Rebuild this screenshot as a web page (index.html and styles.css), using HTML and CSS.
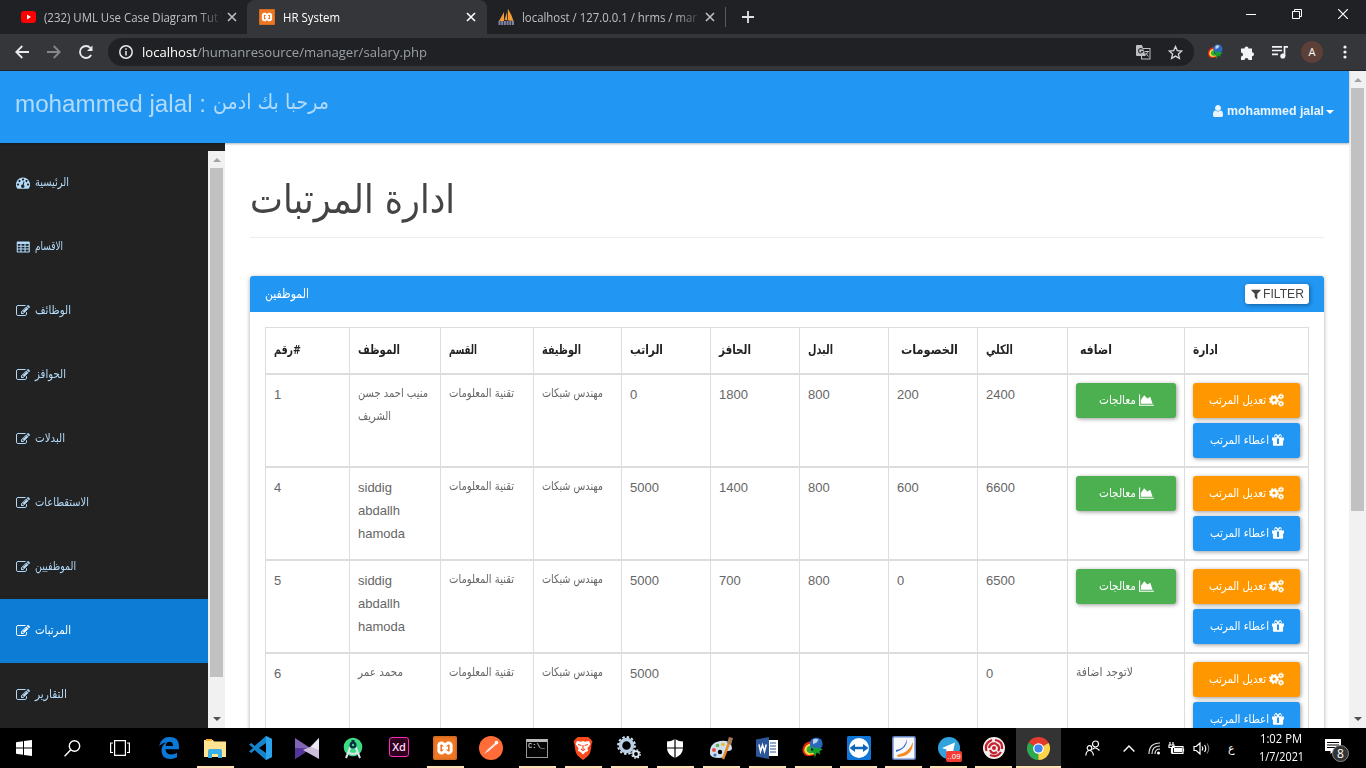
FILE: index.html
```html
<!DOCTYPE html>
<html lang="ar">
<head>
<meta charset="utf-8">
<title>HR System</title>
<link rel="stylesheet" href="styles.css">
</head>
<body>
<svg class="defs" aria-hidden="true">
  <symbol id="edit" viewBox="0 0 1792 1792"><path d="M888 1184l116-116-152-152-116 116v56h96v96h56zm440-720q-16-16-33 1l-350 350q-17 17-1 33t33-1l350-350q17-17 1-33zm80 594v190q0 119-84.500 203.500t-203.500 84.500h-832q-119 0-203.500-84.500t-84.500-203.500v-832q0-119 84.500-203.500t203.500-84.500h832q63 0 117 25 15 7 18 23 3 17-9 29l-49 49q-14 14-32 8-23-6-45-6h-832q-66 0-113 47t-47 113v832q0 66 47 113t113 47h832q66 0 113-47t47-113v-126q0-13 9-22l64-64q15-15 35-7t20 29zm-96-738l288 288-672 672h-288v-288zm444 132l-92 92-288-288 92-92q28-28 68-28t68 28l152 152q28 28 28 68t-28 68z"/></symbol>
  <symbol id="grid" viewBox="0 0 14 14"><path fill-rule="evenodd" d="M1.500 1.500h11.500q.8 0 .8.800v9.400q0 .8-.8.800H1.500q-.8 0-.8-.8V2.300q0-.8.8-.8zM1.800 4v1.800h2.600V4zm3.700 0v1.800h3V4zm4.100 0v1.800h3V4zM1.800 6.800v1.800h2.600V6.800zm3.700 0v1.800h3V6.800zm4.100 0v1.800h3V6.800zM1.800 9.600v1.800h2.600V9.600zm3.700 0v1.800h3V9.600zm4.100 0v1.800h3V9.600z"/></symbol>
  <symbol id="dash" viewBox="0 0 14 14"><path fill-rule="evenodd" d="M7 1.500a7 7 0 0 1 5.900 10.800q-.2.400-.6.400H1.700q-.4 0-.6-.4A7 7 0 0 1 7 1.500zM7 2.500a1 1 0 1 0 .01 0zM3.500 4a1 1 0 1 0 .01 0zM10.500 4a1 1 0 1 0 .01 0zM2 7.500a1 1 0 1 0 .01 0zM12 7.500a1 1 0 1 0 .01 0zM7.500 5.500L6.700 8.600a1.600 1.600 0 1 0 1 .3L8.400 5.700z"/></symbol>
  <symbol id="user" viewBox="0 0 1792 1792"><path d="M1536 1399q0 109-62.500 187t-150.500 78h-854q-88 0-150.500-78t-62.500-187q0-85 8.500-160.500t31.500-152 58.500-131 94-89 134.500-34.500q131 128 313 128t313-128q76 0 134.500 34.500t94 89 58.500 131 31.500 152 8.500 160.500zm-256-887q0 159-112.500 271.500t-271.500 112.500-271.500-112.500-112.500-271.500 112.500-271.500 271.500-112.500 271.500 112.500 112.500 271.500z"/></symbol>
  <symbol id="funnel" viewBox="0 0 1792 1792"><path d="M1595 295q17 41-14 70l-493 493v742q0 42-39 59-13 5-25 5-27 0-45-19l-256-256q-19-19-19-45v-486l-493-493q-31-29-14-70 17-39 59-39h1280q42 0 59 39z"/></symbol>
  <symbol id="area" viewBox="0 0 16 14"><path d="M0 1h1.200v11H16v1.100H0zM2 11V7l3.500-5 3.500 3.500 3-2L14.500 11z"/></symbol>
  <symbol id="cogs" viewBox="0 0 15 14"><g fill="none" stroke="currentColor"><circle cx="5" cy="7" r="2.800" stroke-width="2.500"/><circle cx="5" cy="7" r="4.400" stroke-width="1.400" stroke-dasharray="1.900 1.560"/><circle cx="12" cy="3.500" r="1.600" stroke-width="1.500"/><circle cx="12" cy="3.500" r="2.500" stroke-width=".9" stroke-dasharray="1.200 .76"/><circle cx="12" cy="10.700" r="1.600" stroke-width="1.500"/><circle cx="12" cy="10.700" r="2.500" stroke-width=".9" stroke-dasharray="1.200 .76"/></g></symbol>
  <symbol id="gift" viewBox="0 0 12 14"><path fill-rule="evenodd" d="M0 4.500h3a2 2 0 0 1 1-3.500Q5 1 6 2.800 7 1 8 1a2 2 0 0 1 1 3.500h3v3h-.9v4.300q0 .9-.9.900H1.800q-.9 0-.9-.9V7.500H0zM4 2.200a1 1 0 0 0 0 2h1.300zM8 2.200L6.700 4.200H8a1 1 0 0 0 0-2zM5 5.500V11h2V5.500z"/></symbol>
  <symbol id="x" viewBox="0 0 10 10"><path d="M1 1l8 8M9 1L1 9" stroke="currentColor" stroke-width="1.600" fill="none"/></symbol>
  <symbol id="xampp" viewBox="0 0 24 24"><rect width="24" height="24" rx="2" fill="#ee7724"/><rect x=".8" y=".8" width="22.400" height="22.400" rx="2" fill="none" stroke="#c9661f"/><path d="M8 7h1.500L12 9.500 14.500 7H16q3 .5 2 5 1 4.500-2 5h-1.500L12 14.500 9.500 17H8q-3-.5-2-5-1-4.500 2-5zM9 12h6" fill="none" stroke="#fff" stroke-width="3" stroke-linejoin="round"/></symbol>
  <symbol id="idm" viewBox="0 0 24 24"><path d="M11 4Q1 5 .5 14q0 6 6 7l8-1-3-4-5-2q0-4 6-5z" fill="#e32418"/><path d="M11 6.500Q3 8 2.500 14q0 4.500 5 5.500l6-1-3-3-3-1.500q0-3 4-4z" fill="#ffe034"/><path d="M10 9q-5 1-5 5 0 3 4 4l5-1-4-2z" fill="#30b13c"/><circle cx="15.500" cy="7.500" r="7" fill="#2c68bb"/><path d="M12 3q3-2 6 0l-2 3-4 2z" fill="#bcd3ea"/><path d="M10 11l13 2-3 2-1 1 1 3-4-2-2 6-1-6-3-2 3-1z" fill="#15a32c"/></symbol>
</svg>

<div class="browser">
  <div class="tabs">
    <div class="tab first"><svg width="15" height="12" viewBox="0 0 15 12"><rect width="15" height="12" rx="3" fill="#f00"/><path d="M6 3.500v5l4-2.500z" fill="#fff"/></svg><span class="ttl fade" data-w="174"><i>(232) UML Use Case Diagram Tut</i></span><svg class="close"><use href="#x"/></svg></div>
    <div class="tab active"><svg width="16" height="16"><use href="#xampp"/></svg><span class="ttl" data-w="57"><i>HR System</i></span><svg class="close"><use href="#x"/></svg></div>
    <div class="tab third"><svg width="17" height="17" viewBox="0 0 17 17"><path d="M1 12l5-9v9zM6.500 11L10 0q4 6 5.500 12z" fill="#f39a35"/><path d="M9.500 1v10" stroke="#4d3a20"/><path d="M.5 14h16" stroke="#8083a8" stroke-width="4" stroke-dasharray="2 .7"/></svg><span class="ttl fade" data-w="175"><i>localhost / 127.0.0.1 / hrms / mar</i></span><svg class="close"><use href="#x"/></svg></div>
    <span class="divider"></span>
    <svg class="plus" viewBox="0 0 12 12"><path d="M6 0v12M0 6h12" stroke="#dfe1e5" stroke-width="1.800"/></svg>
    <div class="winctl">
      <svg width="10" height="10"><path d="M0 5.500h10" stroke="#fff"/></svg>
      <svg width="10" height="10" fill="none" stroke="#fff"><path d="M.5 2.500h7v7h-7zM2.500 2.500v-2h7v7h-2"/></svg>
      <svg width="10" height="10"><path d="M0 0l10 10M10 0L0 10" stroke="#fff" stroke-width="1.200"/></svg>
    </div>
  </div>
  <div class="toolbar">
    <svg class="nav" viewBox="0 0 14 14"><path d="M14 7H1.500M7.300 1L1.300 7l6 6"/></svg>
    <svg class="nav dim" viewBox="0 0 14 14"><path d="M0 7h12.500M6.700 1l6 6-6 6"/></svg>
    <svg class="nav" viewBox="0 0 14 14"><path d="M12.200 10A6 6 0 1 1 11.500 3"/><path d="M13.500.5v5.500H8z" fill="#e8eaed" stroke="none"/></svg>
    <div class="omni">
      <svg width="14" height="14" viewBox="0 0 14 14" fill="none" stroke="#e8eaed" stroke-width="1.500"><circle cx="7" cy="7" r="6.200"/><path d="M7 6v4.500M7 3.300v1.500"/></svg>
      <span class="url" data-w="285"><i><b>localhost</b>/humanresource/manager/salary.php</i></span>
      <span class="grow"></span>
      <svg class="translate" width="15" height="15" viewBox="0 0 15 15"><rect x="5.500" y="3.500" width="8.500" height="10.500" fill="none" stroke="#bdc1c6"/><path d="M0 1q0-1 1-1h5l3.500 11H1q-1 0-1-1z" fill="#bdc1c6"/><path d="M6.500 4.500a2.200 2.200 0 1 0 .3 2H5" fill="none" stroke="#333" stroke-width="1.100"/><path d="M8.500 6.500h4.500M11.800 6.500q-.8 3-3 4M9.500 8l3 3.500" fill="none" stroke="#bdc1c6"/></svg>
      <svg width="15" height="15" viewBox="0 0 15 15"><path d="M7.500 1.500l1.800 4.100 4.500.4-3.400 3 1 4.400-3.900-2.300-3.900 2.300 1-4.400-3.400-3 4.500-.4z" fill="none" stroke="#d5d8dc" stroke-width="1.300"/></svg>
    </div>
    <div class="ext">
      <svg width="17" height="16"><use href="#idm"/></svg>
      <svg width="15" height="15" viewBox="0 0 15 15"><path d="M1 3.500h3.500a2 2 0 1 1 4 0H12v3.800a2 2 0 1 1 0 4V15H8.500a2 2 0 1 0-4 0H1v-3.500a2 2 0 1 0 0-4z" fill="#f1f3f4"/></svg>
      <svg width="16" height="14" viewBox="0 0 16 14" stroke="#f1f3f4" stroke-width="1.700" fill="none"><path d="M0 1.800h10M0 5.500h10M0 9.300h6M12.500 11V1.800H16"/><circle cx="10.800" cy="11" r="1.700" fill="#f1f3f4"/></svg>
      <span class="avatar">A</span>
      <svg width="4" height="14" fill="#f1f3f4"><circle cx="2" cy="2" r="1.600"/><circle cx="2" cy="7" r="1.600"/><circle cx="2" cy="12" r="1.600"/></svg>
    </div>
  </div>
</div>

<div class="page">
  <div class="app">
    <header class="topbar">
      <div class="welcome"><span data-w="191"><i>mohammed jalal :</i></span><span class="ar" data-w="116"><i>مرحبا بك ادمن</i></span></div>
      <div class="account"><svg width="14" height="14"><use href="#user"/></svg><span data-w="97"><i>mohammed jalal</i></span><em class="caret"></em></div>
    </header>
    <div class="body">
      <aside class="side">
        <nav class="menu ar">
          <a><svg><use href="#dash"/></svg><span data-w="34"><i>الرئيسية</i></span></a>
          <a><svg><use href="#grid"/></svg><span data-w="28"><i>الاقسام</i></span></a>
          <a><svg><use href="#edit"/></svg><span data-w="36"><i>الوظائف</i></span></a>
          <a><svg><use href="#edit"/></svg><span data-w="31"><i>الحوافز</i></span></a>
          <a><svg><use href="#edit"/></svg><span data-w="30"><i>البدلات</i></span></a>
          <a><svg><use href="#edit"/></svg><span data-w="54"><i>الاستقطاعات</i></span></a>
          <a><svg><use href="#edit"/></svg><span data-w="41"><i>الموظفيين</i></span></a>
          <a class="on"><svg><use href="#edit"/></svg><span data-w="36"><i>المرتبات</i></span></a>
          <a><svg><use href="#edit"/></svg><span data-w="32"><i>التقارير</i></span></a>
        </nav>
        <div class="bar"><em class="up"></em><b class="thumb side-thumb"></b><em class="down"></em></div>
      </aside>
      <main>
        <h1 class="ar"><span data-w="205"><i>ادارة المرتبات</i></span></h1>
        <section class="panel">
          <div class="phead"><span class="ar" data-w="44"><i>الموظفين</i></span><button class="filter"><svg width="12" height="12"><use href="#funnel"/></svg><span data-w="41"><i>FILTER</i></span></button></div>
          <table>
            <colgroup><col style="width:84px"><col style="width:91px"><col style="width:93px"><col style="width:88px"><col style="width:89px"><col style="width:89px"><col style="width:89px"><col style="width:89px"><col style="width:90px"><col style="width:117px"><col style="width:124px"></colgroup>
            <tr class="ar"><th><span data-w="27"><i>رقم#</i></span></th><th><span data-w="42"><i>الموظف</i></span></th><th><span data-w="28"><i>القسم</i></span></th><th><span data-w="39"><i>الوظيفة</i></span></th><th><span data-w="33"><i>الراتب</i></span></th><th><span data-w="32"><i>الحافز</i></span></th><th><span data-w="25"><i>البدل</i></span></th><th class="shift"><span data-w="57"><i>الخصومات</i></span></th><th><span data-w="27"><i>الكلي</i></span></th><th class="shift"><span data-w="32"><i>اضافه</i></span></th><th><span data-w="25"><i>ادارة</i></span></th></tr>
            <tr><td>1</td><td class="ar"><span data-w="70"><i>منيب احمد جسن</i></span><br><span data-w="33"><i>الشريف</i></span></td><td class="ar"><span data-w="65"><i>تقنية المعلومات</i></span></td><td class="ar"><span data-w="61"><i>مهندس شبكات</i></span></td><td>0</td><td>1800</td><td>800</td><td>200</td><td>2400</td><td><button class="btn green ar"><span data-w="37"><i>معالجات</i></span><svg class="wide"><use href="#area"/></svg></button></td><td><button class="btn orange ar"><span data-w="57"><i>تعديل المرتب</i></span><svg class="wide"><use href="#cogs"/></svg></button><button class="btn blue ar"><span data-w="59"><i>اعطاء المرتب</i></span><svg><use href="#gift"/></svg></button></td></tr>
            <tr><td>4</td><td>siddig<br>abdallh<br>hamoda</td><td class="ar"><span data-w="65"><i>تقنية المعلومات</i></span></td><td class="ar"><span data-w="61"><i>مهندس شبكات</i></span></td><td>5000</td><td>1400</td><td>800</td><td>600</td><td>6600</td><td><button class="btn green ar"><span data-w="37"><i>معالجات</i></span><svg class="wide"><use href="#area"/></svg></button></td><td><button class="btn orange ar"><span data-w="57"><i>تعديل المرتب</i></span><svg class="wide"><use href="#cogs"/></svg></button><button class="btn blue ar"><span data-w="59"><i>اعطاء المرتب</i></span><svg><use href="#gift"/></svg></button></td></tr>
            <tr><td>5</td><td>siddig<br>abdallh<br>hamoda</td><td class="ar"><span data-w="65"><i>تقنية المعلومات</i></span></td><td class="ar"><span data-w="61"><i>مهندس شبكات</i></span></td><td>5000</td><td>700</td><td>800</td><td>0</td><td>6500</td><td><button class="btn green ar"><span data-w="37"><i>معالجات</i></span><svg class="wide"><use href="#area"/></svg></button></td><td><button class="btn orange ar"><span data-w="57"><i>تعديل المرتب</i></span><svg class="wide"><use href="#cogs"/></svg></button><button class="btn blue ar"><span data-w="59"><i>اعطاء المرتب</i></span><svg><use href="#gift"/></svg></button></td></tr>
            <tr><td>6</td><td class="ar"><span data-w="45"><i>محمد عمر</i></span></td><td class="ar"><span data-w="65"><i>تقنية المعلومات</i></span></td><td class="ar"><span data-w="61"><i>مهندس شبكات</i></span></td><td>5000</td><td></td><td></td><td></td><td>0</td><td class="ar"><span data-w="57"><i>لاتوجد اضافة</i></span></td><td><button class="btn orange ar"><span data-w="57"><i>تعديل المرتب</i></span><svg class="wide"><use href="#cogs"/></svg></button><button class="btn blue ar"><span data-w="59"><i>اعطاء المرتب</i></span><svg><use href="#gift"/></svg></button></td></tr>
          </table>
        </section>
      </main>
    </div>
  </div>
  <div class="bar"><em class="up"></em><b class="thumb page-thumb"></b><em class="down"></em></div>
</div>

<footer class="taskbar">
  <div class="slot s48"><svg width="16" height="16" fill="#fff"><path d="M0 2.200L7 1.200v6.300H0zM8 1l8-1v7.500H8zM0 8.500h7v6.300L0 13.800zM8 8.500h8V16l-8-1.100z"/></svg></div>
  <div class="slot s48"><svg width="17" height="17" fill="none" stroke="#fff" stroke-width="1.400"><circle cx="10.500" cy="6" r="5.200"/><path d="M6.800 9.800L.6 16.200"/></svg></div>
  <div class="slot s48"><svg width="20" height="16" fill="none" stroke="#fff" stroke-width="1.200"><path d="M4.600.6h10.800v14.800H4.600zM3 3H.6v9.500H3M17 3h2.400v9.500H17"/></svg></div>
  <div class="slot s48 edge"><svg width="20" height="22" viewBox="0 0 20 22"><path d="M0 9.500Q2 0 10.500 0 20 0 20 9v3.300H6.500Q7 17.500 12.500 17.500q3 0 5.500-1.700v4.400Q15 22 11.500 22 2.500 22 2.500 13.500q0-5 4.500-8Q2.500 6 0 9.500zM6.700 9H14q0-4.300-3.500-4.300T6.700 9z" fill="#0b78d7"/></svg></div>
  <div class="slot run"><svg width="22" height="19" viewBox="0 0 22 19"><path d="M0 1h9l1 1.500h12V18H0z" fill="#ffe393"/><path d="M2 1h6" stroke="#f5ae22" stroke-width="2"/><path d="M4 19v-7q0-2 2-2h10q2 0 2 2v7h-4v-4H8v4z" fill="#39afe5"/></svg></div>
  <div class="slot"><svg width="24" height="24" viewBox="0 0 24 24"><path d="M17 0l6 3v18l-6 3L5.500 14 2.500 17 0 15.500 4 12 0 8.500 2.500 7 5.500 10zM17 7l-7 5 7 5z" fill="#1684cc"/><path d="M17 0l6 3v18l-6 3z" fill="#2aa5ed"/></svg></div>
  <div class="slot"><svg width="24" height="21" viewBox="0 0 24 21"><path d="M0 0l16 10.500L0 21z" fill="#8065b5"/><path d="M0 10L16 10.500 0 21z" fill="#54339a"/><path d="M24 0v21L8 12l7-3z" fill="#cdbfdc"/><path d="M24 0v12l-8-3z" fill="#eee8f2"/></svg></div>
  <div class="slot"><svg width="20" height="22" viewBox="0 0 20 22"><circle cx="10" cy="10" r="9.300" fill="#3ddc84"/><path d="M7.500 10L3 21M12.500 10L17 21M5 15q5 4 10 0" stroke="#dce5ea" stroke-width="2" fill="none"/><circle cx="10" cy="8" r="3.500" fill="#073042"/><circle cx="10" cy="8" r="1.200" fill="#3ddc84"/><path d="M10 3V5" stroke="#073042" stroke-width="3"/></svg></div>
  <div class="slot"><span class="xd">Xd</span></div>
  <div class="slot run"><svg width="24" height="24"><use href="#xampp"/></svg></div>
  <div class="slot"><svg width="24" height="24" viewBox="0 0 24 24"><circle cx="12" cy="12" r="12" fill="#ff6c37"/><path d="M5 18l4-5 7-6 2 1-8 7z" fill="#ffe2d8"/><circle cx="17.500" cy="6.500" r="1.800" fill="#fff"/></svg></div>
  <div class="slot run"><span class="cmd">C:\_</span></div>
  <div class="slot run"><svg width="20" height="24" viewBox="0 0 20 24"><path d="M5 1h10l2.500 2 2 2.500-1 2.500q-.5 9-3.500 12l-5 4-5-4Q2 17 1.500 8l-1-2.500 2-2.500z" fill="#fb4a1d"/><path d="M4 5l4 .7L10 5l2 .7L16 5l1.500 3-3 4 .5 3-2.500 1L10 18.500 7.500 16 5 15l.5-3-3-4z" fill="#fff"/><path d="M5 8.500l3.500 1M15 8.500l-3.500 1M10 9v4M8 13l2 1.500 2-1.500" stroke="#fb4a1d" stroke-width="1.200" fill="none"/></svg></div>
  <div class="slot run"><svg width="24" height="24" viewBox="0 0 24 24" fill="none"><circle cx="9.500" cy="9.500" r="6" stroke="#b7cfe6" stroke-width="3.500"/><circle cx="9.500" cy="9.500" r="8.500" stroke="#d7e6f3" stroke-width="1.800" stroke-dasharray="2.400 2.050"/><circle cx="19" cy="18" r="2.800" stroke="#dceaf5" stroke-width="1.800"/><circle cx="19" cy="18" r="4.200" stroke="#dceaf5" stroke-width="1.300" stroke-dasharray="1.700 1.600"/></svg></div>
  <div class="slot run"><svg width="16" height="19" viewBox="0 0 16 19"><path d="M8 0q4 2.500 8 2.500V9q0 6.500-8 10Q0 15.500 0 9V2.500Q4 2.500 8 0z" fill="#fff"/><path d="M8 0v19M0 9h16" stroke="#000" stroke-width="1.200"/></svg></div>
  <div class="slot run"><svg width="25" height="24" viewBox="0 0 25 24"><path d="M1 18Q0 7 11 5t12 7q0 3-4 3-3 0-3 3 0 4-6 4-8 0-9-4z" fill="#cfe0ee"/><circle cx="5" cy="14" r="2" fill="#e4513b"/><circle cx="8.500" cy="9.500" r="1.800" fill="#62b24f"/><circle cx="14" cy="8.500" r="1.800" fill="#e9bb2e"/><circle cx="11" cy="16" r="2.200" fill="#000"/><circle cx="6" cy="19" r="1.600" fill="#3b74c8"/><path d="M14 23l6-16" stroke="#e98b2b" stroke-width="2.500"/><path d="M18 7l2-6 4 1-2 7z" fill="#a47b55"/></svg></div>
  <div class="slot run"><svg width="22" height="22" viewBox="0 0 22 22"><path d="M12 3h10v16H12z" fill="#fff"/><path d="M14 6h6M14 9h6M14 12h6M14 15h6" stroke="#2b579a" stroke-width="1.200"/><path d="M0 2.500L13 0v22L0 19.500z" fill="#2b579a"/><path d="M3 7.500l1.500 7 2-6.500 2 6.500 1.700-7" fill="none" stroke="#fff" stroke-width="1.500"/></svg></div>
  <div class="slot run"><svg width="24" height="22"><use href="#idm"/></svg></div>
  <div class="slot run s45"><svg width="24" height="24" viewBox="0 0 24 24"><rect width="24" height="24" rx="1.500" fill="#0f75d6"/><circle cx="12" cy="12" r="10" fill="#fff"/><path d="M2.500 12L8 8v2.700h8V8l5.500 4-5.500 4v-2.700H8V16z" fill="#0f65b8"/></svg></div>
  <div class="slot run s45"><svg width="24" height="24" viewBox="0 0 24 24"><rect x=".8" y=".8" width="22.400" height="22.400" rx="1.500" fill="#f6f8fc" stroke="#6180bd" stroke-width="1.600"/><path d="M4 14Q13 13 15 3q1 9-11 13z" fill="#386cc0"/><path d="M5 19Q17 17 21 6q0 14-15 15z" fill="#f58a20"/></svg></div>
  <div class="slot run s45 tg"><svg width="22" height="22" viewBox="0 0 22 22"><circle cx="11" cy="11" r="11" fill="#30a3dc"/><path d="M4 11l13-5.500-2.500 12-4-3-2 2v-4z" fill="#fff"/></svg><span class="badge">..09</span></div>
  <div class="slot run s45"><svg width="22" height="22" viewBox="0 0 22 22"><circle cx="11" cy="11" r="11" fill="#f4eeee"/><g fill="none" stroke="#c5202d" stroke-width="2.200"><path d="M3.500 14Q1 6 9 3M12 3q8 1 7 9M18 15q-4 6-11 3M6 11q1-5 7-4.500M13 7q5 3 2 7M14 15q-5 3-7-2"/></g><circle cx="11" cy="11" r="2" fill="#c5202d"/></svg></div>
  <div class="slot run s45 cur"><svg width="23" height="23" viewBox="0 0 24 24"><path d="M12 12L1.600 6A12 12 0 0 1 22.400 6z" fill="#e33b2e"/><path d="M12 12l10.400-6A12 12 0 0 1 12 24z" fill="#fdd347"/><path d="M12 12v12A12 12 0 0 1 1.600 6z" fill="#2da94f"/><path d="M12 6h10.400L12 12z" fill="#e33b2e"/><path d="M6.800 15L1.600 6 12 12z" fill="#2da94f"/><path d="M17.200 15L12 24V12z" fill="#fdd347"/><circle cx="12" cy="12" r="5.600" fill="#fff"/><circle cx="12" cy="12" r="4.300" fill="#4384f3"/></svg></div>
  <div class="tray">
    <svg class="people" width="16" height="16" fill="none" stroke="#fff" stroke-width="1.200"><circle cx="10.500" cy="4" r="3"/><path d="M7.500 9.500Q10 6 14.500 10.500"/><circle cx="4.500" cy="8" r="2.300"/><path d="M.8 15.500q.5-5 3.700-5t4 5"/></svg>
    <svg class="chev" width="12" height="7" fill="none" stroke="#fff" stroke-width="1.400"><path d="M.6 6.400L6 1l5.400 5.400"/></svg>
    <svg class="wifi" width="13" height="13" fill="none" stroke="#ddd" stroke-width="1.200"><path d="M1 12Q1 1 12 1M4 12q0-8 8-8M7 12q0-5 5-5"/><circle cx="10.500" cy="11" r="1.500" fill="#fff" stroke="none"/></svg>
    <svg class="batt" width="17" height="13" fill="none" stroke="#fff" stroke-width="1.200"><path d="M4.500 4.600H15v6.800H4.500zM15.500 6.500v3M1 3h5v2.500H1zM2 0v3M5 0v3M3.500 5.500v6"/><path d="M6 6h8v4H6z" fill="#fff" stroke="none"/></svg>
    <svg class="vol" width="17" height="13" fill="none" stroke="#fff" stroke-width="1.200"><path d="M1 4.500h2.200L7 1v11L3.200 8.500H1zM9 4.500q1.500 2 0 4M11.500 3q2.500 3.500 0 7"/><path d="M14 1.500q3.500 5 0 10" stroke="#777"/></svg>
    <span class="lang ar">ع</span>
    <div class="clock"><span data-w="42"><i>1:02 PM</i></span><span data-w="45"><i>1/7/2021</i></span></div>
    <div class="note"><svg width="16" height="15" viewBox="0 0 16 15"><path d="M0 0h16v12H9l-3.500 3v-3H0z" fill="#fff"/><path d="M2 3.500h12M2 6h12M2 8.500h8" stroke="#000"/></svg><span class="count">8</span></div>
  </div>
</footer>
<script src="fit.js"></script>
</body>
</html>
```

FILE: styles.css
```css
* { box-sizing: border-box; }
body { margin: 0; width: 1366px; height: 768px; overflow: hidden; display: flex; flex-direction: column; background: #fff; font: 13px/23px "Liberation Sans", "DejaVu Sans", sans-serif; color: #666; }
i, em { font-style: normal; }
svg { flex: none; }
svg:not([fill]) { fill: currentColor; }
.defs { position: absolute; width: 0; height: 0; }
.ar { font-family: "DejaVu Sans", sans-serif; }
[data-w] { display: inline-block; white-space: nowrap; flex: none; vertical-align: top; }
[data-w] > i { display: inline-block; transform-origin: 0 50%; white-space: nowrap; }

.browser { height: 71px; flex: none; background: #35363a; border-bottom: 1px solid #242528; font-family: "Open Sans", sans-serif; }
.tabs { height: 34px; display: flex; align-items: center; background: #202124; color: #bdc1c6; }
.tab { height: 34px; display: flex; align-items: center; font-size: 12px; }
.tab.first { width: 247px; padding-left: 21px; }
.tab.first .ttl { margin-left: 8px; }
.tab.first .close { margin-left: 9px; }
.tab.active { width: 240px; padding-left: 12px; background: #35363a; color: #fff; border-radius: 8px 8px 0 0; }
.tab.active .ttl { margin-left: 8px; }
.tab.active .close { margin-left: 126px; }
.tab.third { width: 238px; padding-left: 11px; }
.tab.third .ttl { margin-left: 7px; }
.tab.third .close { margin-left: 8px; }
.fade { -webkit-mask-image: linear-gradient(90deg, #000 88%, rgba(0,0,0,.2)); mask-image: linear-gradient(90deg, #000 88%, rgba(0,0,0,.2)); }
.close { width: 10px; height: 10px; }
.divider { width: 1px; height: 20px; background: #5b5c60; }
.plus { width: 12px; height: 12px; margin-left: 16px; }
.winctl { margin: -6px 18px 0 auto; display: flex; align-items: center; gap: 36px; }
.toolbar { height: 36px; display: flex; align-items: center; padding-left: 15px; }
.nav { width: 14px; height: 14px; margin-right: 18px; stroke: #e8eaed; stroke-width: 1.800; }
svg.nav { fill: none; }
.nav.dim { stroke: #85878b; }
.omni { width: 1086px; height: 28px; margin-left: -3px; padding: 0 11px 0 11px; border-radius: 14px; background: #202124; display: flex; align-items: center; }
.url { margin-left: 9px; font-size: 13.500px; color: #9aa0a6; }
.url b { font-weight: 400; color: #fff; }
.grow { flex: 1; }
.translate { margin-right: 17px; }
.ext { display: flex; align-items: center; margin-left: 13px; }
.ext svg:nth-child(2) { margin-left: 16px; }
.ext svg:nth-child(3) { margin-left: 17px; }
.avatar { width: 22px; height: 22px; border-radius: 50%; background: #5d4037; color: #fff; font-size: 11px; line-height: 22px; text-align: center; margin: 0 20px 0 13px; }

.page { height: 657px; flex: none; display: flex; overflow: hidden; }
.app { width: 1349px; height: 657px; display: flex; flex-direction: column; }
.topbar { height: 72px; flex: none; background: #2196f3; box-shadow: 0 1px 2px rgba(0,0,0,.3); display: flex; justify-content: space-between; z-index: 1; }
.welcome { display: flex; padding: 22px 0 0 15px; gap: 7px; color: #b2dbfb; font-size: 23px; }
.welcome .ar { font-size: 21px; margin-top: -2px; }
.account { display: flex; align-items: center; height: 23px; margin: 28px 15px 0 0; color: #e9f5fe; font-size: 13px; font-weight: 700; }
.account svg { margin-right: 2px; }
.caret { width: 0; height: 0; border: 4px solid transparent; border-top-color: #fff; border-bottom: 0; margin: 2px 0 0 2px; }
.body { flex: 1; display: flex; min-height: 0; }
.side { width: 225px; display: flex; padding-top: 8px; background: #222; }
.menu { width: 208px; overflow: hidden; font-size: 12px; color: #b2dbfb; }
.menu a { height: 64px; padding: 0 0 1px 16px; display: flex; align-items: center; gap: 5px; }
.menu svg { width: 14px; height: 14px; margin-top: 1px; }
.menu .on { background: #0c7cd5; color: #fff; }
.bar { width: 17px; flex: none; background: #f1f1f1; display: flex; flex-direction: column; align-items: center; }
.bar em { border: 4px solid transparent; width: 0; height: 0; flex: none; }
.bar .up { border-bottom-color: #a3a3a3; border-top: 0; margin: 7px 0 6px; }
.bar .down { border-top-color: #505050; border-bottom: 0; margin: auto 0 7px; }
.thumb { width: 13px; background: #c1c1c1; }
.side-thumb { height: 509px; }
.page-thumb { height: 423px; }

main { width: 1124px; padding: 0 25px; overflow: hidden; }
h1 { height: 95px; margin: 0 0 38px; padding-top: 28px; border-bottom: 1px solid #eee; font-size: 40px; line-height: 56px; font-weight: 400; color: #444; }
.panel { height: 500px; background: #fff; border-radius: 3px; box-shadow: 0 1px 4px rgba(0,0,0,.35); }
.phead { height: 36px; padding: 0 15px; background: #2196f3; border-radius: 3px 3px 0 0; display: flex; align-items: center; justify-content: space-between; color: #fff; }
.phead > .ar { font-size: 13px; margin-top: -2px; }
button { border: 0; padding: 0; font: inherit; display: flex; align-items: center; }
.filter { width: 64px; height: 20px; justify-content: center; gap: 1px; padding-right: 1px; border-radius: 3px; background: #fff; color: #444; font-size: 12px; box-shadow: 1px 1px 4px rgba(0,0,0,.4); }
table { width: 1044px; margin: 15px; table-layout: fixed; border-spacing: 0; border: solid #ddd; border-width: 1px 0 0 1px; }
th, td { border: solid #ddd; border-width: 0 1px 2px 0; padding: 8px 8px 0; vertical-align: top; text-align: left; }
th { height: 47px; padding-top: 10px; color: #222; font-size: 13px; font-weight: 700; }
th.shift { padding-left: 12px; }
td { height: 93px; }
td.ar { font-size: 12px; padding-top: 7px; }
.btn { height: 35px; width: 107px; margin-bottom: 5px; justify-content: center; gap: 3px; padding-bottom: 1px; border-radius: 3px; color: #fff; box-shadow: 1px 1px 4px rgba(0,0,0,.4); font-family: "DejaVu Sans", sans-serif; font-size: 12px; }
.btn svg { width: 12px; height: 14px; }
.btn svg.wide { width: 15px; }
.green { width: 100px; background: #4caf50; }
.orange { background: #ff9800; }
.blue { background: #2196f3; }

.taskbar { height: 40px; flex: none; background: #000; display: flex; color: #fff; position: relative; z-index: 2; }
.slot { width: 46px; height: 40px; flex: none; display: flex; align-items: center; justify-content: center; }
.s48 { width: 48px; }
.s45 { width: 45px; }
.edge { padding-left: 2px; }
.run { background: linear-gradient(#fde0b4, #fde0b4) 50% 100% / 37px 2px no-repeat; }
.cur { background: linear-gradient(#fde0b4, #fde0b4) 50% 100% / 100% 2px no-repeat #333; }
.xd { width: 20px; height: 20px; border: 1px solid #ff2bc2; border-radius: 3px; background: #2e001e; font: 600 11px/17px "Open Sans", sans-serif; text-align: center; color: #ffd9f5; margin-top: -3px; }
.cmd { width: 22px; height: 19px; background: #050505; border: 1px solid #999; border-top: 3px solid #bbb; font: 7px/9px "Liberation Mono", monospace; padding-left: 1px; }
.tg { position: relative; }
.badge { position: absolute; left: 20px; top: 23px; width: 16px; height: 11px; background: #f23c34; border-radius: 2px; font-size: 8px; line-height: 11px; text-align: center; }
.tray { display: flex; align-items: center; flex: 1; }
.chev { margin-left: 22px; }
.people { margin-left: 24px; }
.wifi { margin-left: 13px; }
.batt { margin-left: 7px; }
.vol { margin-left: 8px; }
.lang { margin-left: 18px; width: 8px; font-size: 11px; }
.clock { width: 60px; margin-left: 15px; display: flex; flex-direction: column; align-items: center; font: 12px/18px "Open Sans", sans-serif; }
.note { position: relative; width: 24px; height: 24px; margin-left: 14px; padding-top: 3px; }
.note svg { display: block; }
.count { position: absolute; left: 7px; top: 9px; width: 17px; height: 17px; border-radius: 50%; background: #333; border: 1px solid #888; font: 12px/15px "Open Sans", sans-serif; text-align: center; }
```

FILE: fit.js
```js
document.querySelectorAll('[data-w]').forEach(function (box) {
  var label = box.firstElementChild;
  var target = Number(box.dataset.w);
  var natural = label.getBoundingClientRect().width;
  box.style.width = target + 'px';
  label.style.transform = 'scaleX(' + target / natural + ')';
});
```
